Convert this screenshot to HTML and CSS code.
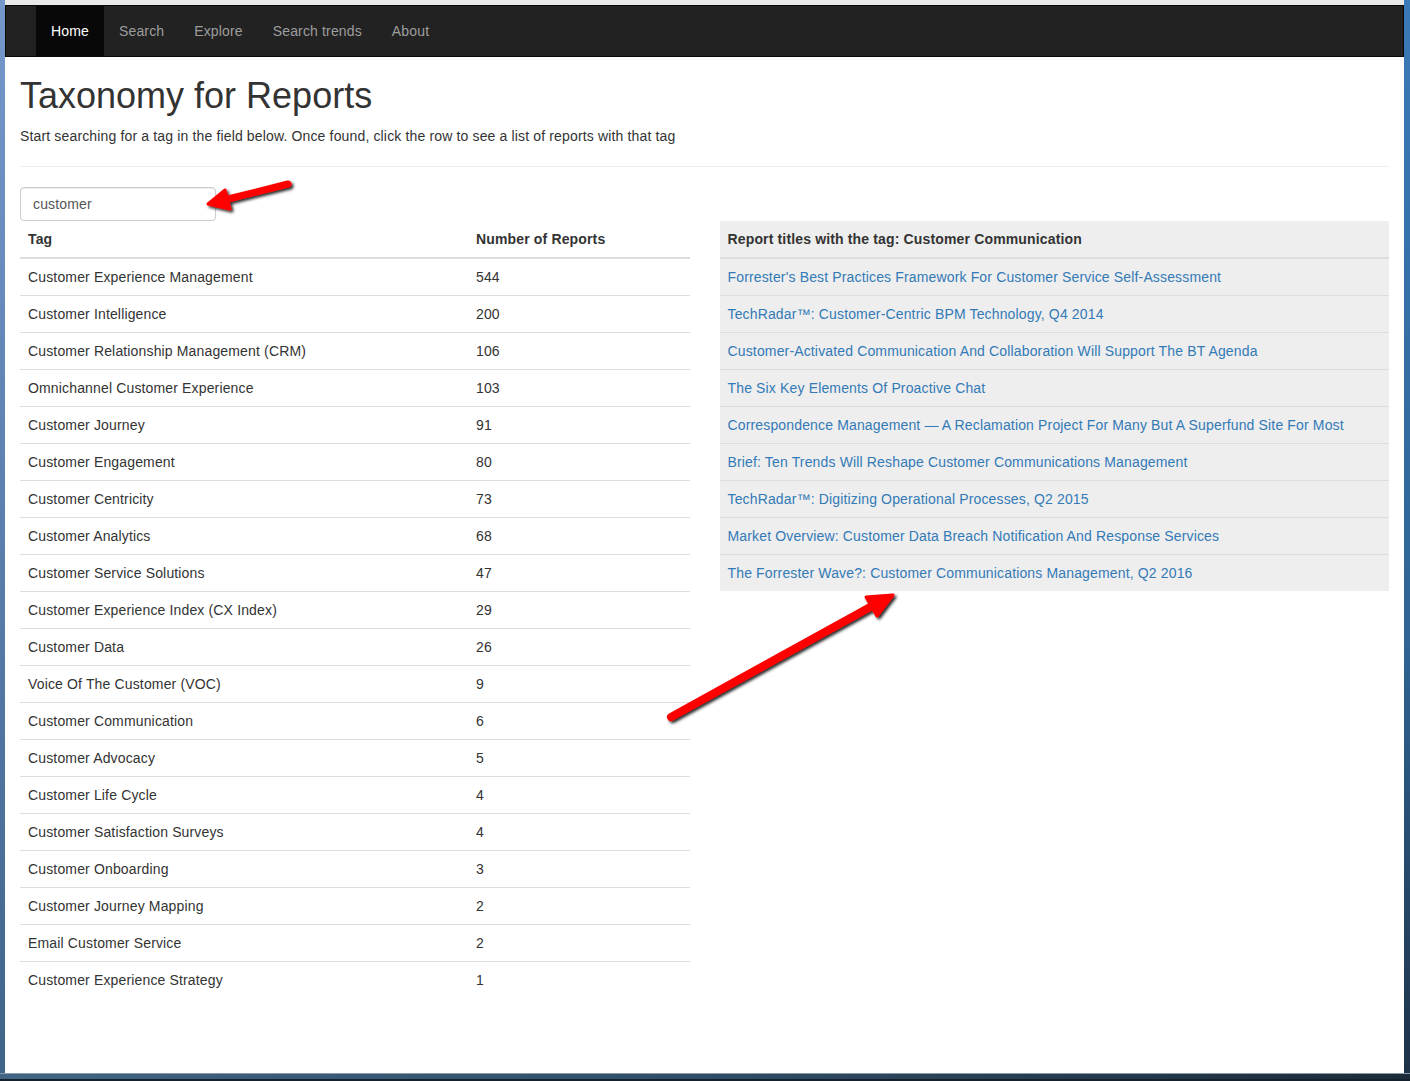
FILE: index.html
```html
<!DOCTYPE html>
<html lang="en">
<head>
<meta charset="utf-8">
<title>Taxonomy for Reports</title>
<link rel="stylesheet" href="styles.css">
</head>
<body>
<div class="screen">
  <div class="edge-left"></div>
  <div class="window">
    <nav class="navbar">
      <ul class="nav">
        <li class="active"><a href="#">Home</a></li>
        <li><a href="#">Search</a></li>
        <li><a href="#">Explore</a></li>
        <li><a href="#">Search trends</a></li>
        <li><a href="#">About</a></li>
      </ul>
    </nav>
    <div class="container">
      <h1>Taxonomy for Reports</h1>
      <p class="lead">Start searching for a tag in the field below. Once found, click the row to see a list of reports with that tag</p>
      <hr>
      <input class="search" type="text" value="customer">
      <div class="row">
        <div class="col">
          <table class="table tags">
            <thead>
              <tr><th class="c-tag">Tag</th><th>Number of Reports</th></tr>
            </thead>
            <tbody>
              <tr><td>Customer Experience Management</td><td>544</td></tr>
              <tr><td>Customer Intelligence</td><td>200</td></tr>
              <tr><td>Customer Relationship Management (CRM)</td><td>106</td></tr>
              <tr><td>Omnichannel Customer Experience</td><td>103</td></tr>
              <tr><td>Customer Journey</td><td>91</td></tr>
              <tr><td>Customer Engagement</td><td>80</td></tr>
              <tr><td>Customer Centricity</td><td>73</td></tr>
              <tr><td>Customer Analytics</td><td>68</td></tr>
              <tr><td>Customer Service Solutions</td><td>47</td></tr>
              <tr><td>Customer Experience Index (CX Index)</td><td>29</td></tr>
              <tr><td>Customer Data</td><td>26</td></tr>
              <tr><td>Voice Of The Customer (VOC)</td><td>9</td></tr>
              <tr><td>Customer Communication</td><td>6</td></tr>
              <tr><td>Customer Advocacy</td><td>5</td></tr>
              <tr><td>Customer Life Cycle</td><td>4</td></tr>
              <tr><td>Customer Satisfaction Surveys</td><td>4</td></tr>
              <tr><td>Customer Onboarding</td><td>3</td></tr>
              <tr><td>Customer Journey Mapping</td><td>2</td></tr>
              <tr><td>Email Customer Service</td><td>2</td></tr>
              <tr><td>Customer Experience Strategy</td><td>1</td></tr>
            </tbody>
          </table>
        </div>
        <div class="col">
          <table class="table reports">
            <thead>
              <tr><th>Report titles with the tag: Customer Communication</th></tr>
            </thead>
            <tbody>
              <tr><td><a href="#">Forrester's Best Practices Framework For Customer Service Self-Assessment</a></td></tr>
              <tr><td><a href="#">TechRadar™: Customer-Centric BPM Technology, Q4 2014</a></td></tr>
              <tr><td><a href="#">Customer-Activated Communication And Collaboration Will Support The BT Agenda</a></td></tr>
              <tr><td><a href="#">The Six Key Elements Of Proactive Chat</a></td></tr>
              <tr><td><a href="#">Correspondence Management — A Reclamation Project For Many But A Superfund Site For Most</a></td></tr>
              <tr><td><a href="#">Brief: Ten Trends Will Reshape Customer Communications Management</a></td></tr>
              <tr><td><a href="#">TechRadar™: Digitizing Operational Processes, Q2 2015</a></td></tr>
              <tr><td><a href="#">Market Overview: Customer Data Breach Notification And Response Services</a></td></tr>
              <tr><td><a href="#">The Forrester Wave?: Customer Communications Management, Q2 2016</a></td></tr>
            </tbody>
          </table>
        </div>
      </div>
    </div>
  </div>
  <div class="edge-right"></div>
  <div class="edge-bottom"></div>
  <svg class="annotations" width="1410" height="1081" viewBox="0 0 1410 1081" aria-hidden="true">
    <defs>
      <filter id="shadow" x="-20%" y="-20%" width="140%" height="140%">
        <feDropShadow dx="2" dy="2" stdDeviation="1.4" flood-color="#000" flood-opacity="0.85"/>
      </filter>
    </defs>
    <g filter="url(#shadow)" fill="#f00" stroke="#f00" stroke-linejoin="round" stroke-linecap="round">
      <line x1="288" y1="184" x2="226" y2="199.5" stroke-width="7"/>
      <polygon points="208,204 230,209 225,190" stroke-width="3"/>
      <line x1="671" y1="717" x2="872" y2="606" stroke-width="8"/>
      <polygon points="893,595 877,616 866,597" stroke-width="3"/>
    </g>
  </svg>
</div>
</body>
</html>
```

FILE: styles.css
```css
* { box-sizing: border-box; }

html, body {
  margin: 0;
  padding: 0;
}

body {
  font-family: "Liberation Sans", Arial, Helvetica, sans-serif;
  font-size: 14px;
  line-height: 20px;
  letter-spacing: 0.15px;
  color: #333;
  background: #1d2c3a;
}

.screen {
  position: relative;
  width: 1410px;
  height: 1081px;
  display: grid;
  grid-template-columns: 5px 1399px 6px;
  grid-template-rows: 1073px 8px;
  overflow: hidden;
}

.edge-left {
  background: linear-gradient(to bottom, #7498cb 0%, #5a7fae 50%, #3f6489 100%);
}

.edge-right {
  background: linear-gradient(to bottom, #3a7ab8 0%, #2f6494 60%, #1d3247 100%);
}

.edge-bottom {
  grid-column: 1 / 4;
  background: linear-gradient(to right, #416584 0%, #2f4d66 50%, #1b2b39 100%);
  border-top: 1px solid #8a9aa8;
  border-bottom: 2px solid #14202b;
}

.window {
  background: #fff;
  border-top: 5px solid #e9e9e9;
  overflow: hidden;
}

/* navbar */
.navbar {
  background: #222;
  border: 1px solid #080808;
  height: 52px;
  margin-bottom: 19px;
}

.nav {
  list-style: none;
  margin: 0;
  padding: 0 0 0 30px;
  display: flex;
}

.nav a {
  display: block;
  padding: 15px;
  line-height: 20px;
  color: #9d9d9d;
  text-decoration: none;
}

.nav .active a {
  background: #080808;
  color: #fff;
}

/* content */
.container {
  padding: 0 15px;
}

h1 {
  font-size: 36px;
  font-weight: 500;
  line-height: 1.1;
  letter-spacing: 0;
  margin: 19px 0 10px;
  color: #333;
}

.lead {
  margin: 0 0 10px;
}

hr {
  border: 0;
  border-top: 1px solid #eee;
  margin: 20px 0;
}

.search {
  display: block;
  width: 196px;
  height: 34px;
  padding: 6px 12px;
  font-family: inherit;
  font-size: 14px;
  line-height: 20px;
  letter-spacing: 0.15px;
  color: #555;
  background: #fff;
  border: 1px solid #ccc;
  border-radius: 4px;
  box-shadow: inset 0 1px 1px rgba(0,0,0,.075);
  outline: none;
}

.row {
  display: flex;
  margin: 0 -15px;
}

.col {
  width: 50%;
  padding: 0 15px;
}

.table {
  width: 100%;
  border-collapse: collapse;
  border-spacing: 0;
}

.table th,
.table td {
  padding: 8px;
  line-height: 20px;
  text-align: left;
  vertical-align: top;
}

.table th {
  font-weight: bold;
  border-bottom: 2px solid #ddd;
}

.table td {
  border-top: 1px solid #ddd;
}

.tags .c-tag {
  width: 448px;
}

.reports {
  background: #eee;
}

.reports a {
  color: #337ab7;
  text-decoration: none;
}

.annotations {
  position: absolute;
  left: 0;
  top: 0;
  pointer-events: none;
}
```
